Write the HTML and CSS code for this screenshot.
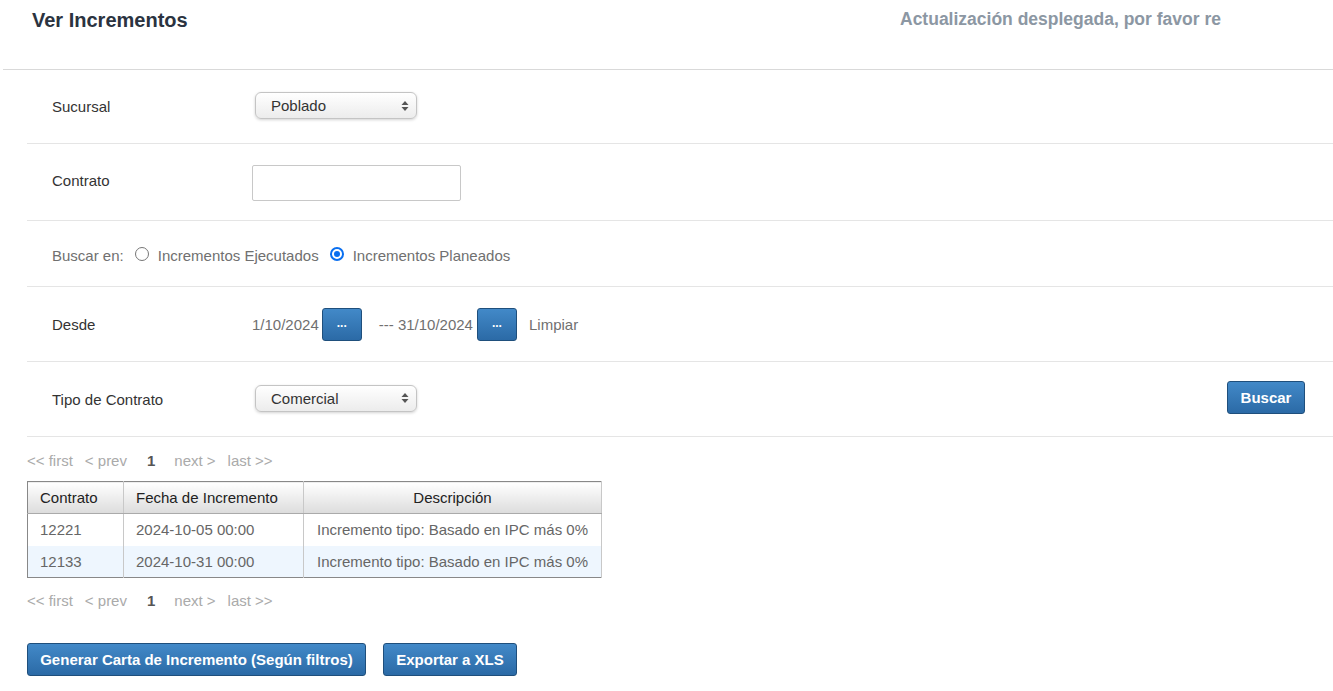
FILE: index.html
```html
<!DOCTYPE html>
<html lang="es">
<head>
<meta charset="utf-8">
<title>Ver Incrementos</title>
<link rel="stylesheet" href="styles.css">
</head>
<body>
<div class="header">
  <h1 class="title">Ver Incrementos</h1>
  <div class="notice">Actualización desplegada, por favor re</div>
</div>
<div class="content">
  <div class="form">
    <div class="row r1">
      <div class="label">Sucursal</div>
      <div class="select"><span>Poblado</span><span class="arrows"><svg width="8" height="12" viewBox="0 0 8 12"><path d="M4 1 L7.5 5 H0.5 Z M4 11 L7.5 7 H0.5 Z" fill="#555"/></svg></span></div>
    </div>
    <div class="row r2">
      <div class="label">Contrato</div>
      <div class="input"></div>
    </div>
    <div class="row r3">
      <span class="muted">Buscar en:</span>
      <span class="radio"></span><span class="muted">Incrementos Ejecutados</span>
      <span class="radio checked"></span><span class="muted">Incrementos Planeados</span>
    </div>
    <div class="row r4">
      <div class="label">Desde</div>
      <span class="muted">1/10/2024</span>
      <span class="btn dots">...</span>
      <span class="muted sep">--- 31/10/2024</span>
      <span class="btn dots">...</span>
      <span class="muted limp">Limpiar</span>
    </div>
    <div class="row r5">
      <div class="label">Tipo de Contrato</div>
      <div class="select"><span>Comercial</span><span class="arrows"><svg width="8" height="12" viewBox="0 0 8 12"><path d="M4 1 L7.5 5 H0.5 Z M4 11 L7.5 7 H0.5 Z" fill="#555"/></svg></span></div>
      <div class="spacer"></div>
      <span class="btn buscar">Buscar</span>
    </div>
  </div>
  <div class="pager p1"><span>&lt;&lt; first</span><span>&lt; prev</span><span class="cur">1</span><span>next &gt;</span><span>last &gt;&gt;</span></div>
  <table class="grid">
    <thead>
      <tr><th class="c1">Contrato</th><th class="c2">Fecha de Incremento</th><th class="c3">Descripción</th></tr>
    </thead>
    <tbody>
      <tr><td>12221</td><td>2024-10-05 00:00</td><td class="desc">Incremento tipo: Basado en IPC más 0%</td></tr>
      <tr class="alt"><td>12133</td><td>2024-10-31 00:00</td><td class="desc">Incremento tipo: Basado en IPC más 0%</td></tr>
    </tbody>
  </table>
  <div class="pager p2"><span>&lt;&lt; first</span><span>&lt; prev</span><span class="cur">1</span><span>next &gt;</span><span>last &gt;&gt;</span></div>
  <div class="actions">
    <span class="btn big gen">Generar Carta de Incremento (Según filtros)</span>
    <span class="btn big xls">Exportar a XLS</span>
  </div>
</div>
</body>
</html>
```
FILE: styles.css
```css
* { box-sizing: border-box; }
html, body { margin: 0; padding: 0; background: #fff; }
body { font-family: "Liberation Sans", Arial, sans-serif; font-size: 15px; color: #333; width: 1333px; height: 691px; overflow: hidden; }

.header { height: 70px; margin-left: 3px; border-bottom: 1px solid #d9d9d9; display: flex; align-items: flex-start; }
.title { margin: 0; padding: 9px 0 0 29px; font-size: 20px; font-weight: bold; color: #2b3340; line-height: 22px; width: 897px; }
.notice { padding-top: 9px; font-size: 17.5px; font-weight: bold; color: #8c97a3; line-height: 20px; }

.content { padding-left: 27px; }
.row { display: flex; align-items: center; border-bottom: 1px solid #e5e5e5; padding-left: 25px; }
.r1 { height: 74px; }
.r2 { height: 77px; }
.r2 .label { margin-top: -3px; }
.r3 { height: 66px; padding-top: 4px; }
.r4 { height: 75px; }
.r5 { height: 75px; padding-right: 28px; }
.label { width: 203px; flex-shrink: 0; color: #333; }
.r2 .label, .r4 .label { width: 200px; }

.select { width: 162px; height: 27px; border: 1px solid #c4c4c4; border-radius: 6px; background: linear-gradient(#ffffff, #ececec); box-shadow: 0 1px 3px rgba(0,0,0,0.18); display: flex; align-items: center; justify-content: space-between; padding: 0 7px 0 15px; color: #333; margin-top: -2px; }
.arrows { display: flex; align-items: center; }
.input { width: 209px; height: 36px; border: 1px solid #c8c8c8; border-radius: 2px; margin-top: 1px; }

.muted { color: #707070; }
.radio { width: 14px; height: 14px; border: 1px solid #767676; border-radius: 50%; margin: 0 9px 0 11px; display: inline-block; position: relative; top: -2px; }
.radio.checked { border: 2px solid #0a6ff0; }
.radio.checked::after { content: ""; position: absolute; left: 2px; top: 2px; width: 6px; height: 6px; border-radius: 50%; background: #0a6ff0; }

.btn { display: inline-flex; align-items: center; justify-content: center; height: 33px; color: #fff; font-weight: bold; background: linear-gradient(#4289c8, #2b6aa6); border: 1px solid #1f4f7c; border-radius: 3px; }
.dots { width: 40px; margin-left: 3px; font-size: 12px; padding-bottom: 2px; }
.sep { margin-left: 17px; margin-right: 1px; }
.limp { margin-left: 12px; }
.spacer { flex: 1; }
.buscar { width: 78px; margin-top: -3px; }

.pager { display: flex; color: #aaa; height: 22px; align-items: center; }
.pager span { margin-right: 12px; }
.pager .cur { color: #555; font-weight: bold; margin: 0 19px 0 8px; }
.p1 { margin-top: 12px; margin-bottom: 10px; }
.p2 { margin-top: 11px; }

.grid { border-collapse: collapse; width: 575px; border: 1px solid #888; }
.grid th { height: 32px; font-weight: normal; color: #222; background: linear-gradient(#ffffff, #dcdcdc); border-right: 1px solid #c8c8c8; border-bottom: 1px solid #aaa; text-align: left; padding: 0 12px; }
.grid th.c1 { width: 96px; }
.grid th.c2 { width: 180px; }
.grid th.c3 { text-align: center; }
.grid td { height: 32px; padding: 0 12px; color: #666; border-right: 1px solid #c8c8c8; }
.grid td.desc { text-align: center; }
.grid tr.alt td { background: #eef6fe; }

.actions { display: flex; gap: 17px; margin-top: 32px; }
.big { padding: 0 12px; }
.gen { width: 339px; }
.xls { width: 134px; }
```
